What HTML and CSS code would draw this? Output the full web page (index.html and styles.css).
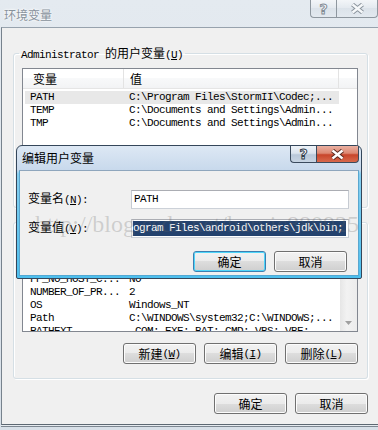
FILE: index.html
```html
<!DOCTYPE html>
<html>
<head>
<meta charset="utf-8">
<link rel="stylesheet" href="styles.css">
</head>
<body>
<div class="window">
  <div class="titlebar">
    <span class="wtitle">环境变量</span>
    <div class="wcaption">
      <span class="wbtn whelp">?</span>
      <span class="wbtn wclose">
        <svg width="15" height="11" viewBox="0 0 15 11"><path d="M2.5 1.5 L12.5 9.5 M12.5 1.5 L2.5 9.5" stroke="#8a939c" stroke-width="4.4" fill="none"/><path d="M2.5 1.5 L12.5 9.5 M12.5 1.5 L2.5 9.5" stroke="#f6f8fa" stroke-width="2.4" fill="none"/></svg>
      </span>
    </div>
  </div>
  <div class="client">
    <fieldset class="group g1">
      <legend><span class="m">Administrator </span>的用户变量<span class="m">(<u>U</u>)</span></legend>
      <div class="list l1">
        <div class="lmain">
          <div class="lhead"><span class="hc c1">变量</span><span class="hc c2">值</span><span class="hc c3"></span></div>
          <div class="rows m">
            <div class="row sel"><span class="c1">PATH</span><span class="c2">C:\Program Files\StormII\Codec;...</span></div>
            <div class="row"><span class="c1">TEMP</span><span class="c2">C:\Documents and Settings\Admin...</span></div>
            <div class="row"><span class="c1">TMP</span><span class="c2">C:\Documents and Settings\Admin...</span></div>
          </div>
        </div>
      </div>
    </fieldset>
    <fieldset class="group g2">
      <legend>系统变量<span class="m">(<u>S</u>)</span></legend>
      <div class="list l2">
        <div class="lmain">
          <div class="lhead"><span class="hc c1">变量</span><span class="hc c2">值</span></div>
          <div class="rows m">
            <div class="row"><span class="c1">ComSpec</span><span class="c2">C:\WINDOWS\system32\cmd.exe</span></div>
            <div class="row"><span class="c1">FP_NO_HOST_C...</span><span class="c2">NO</span></div>
            <div class="row"><span class="c1">NUMBER_OF_PR...</span><span class="c2">2</span></div>
            <div class="row"><span class="c1">OS</span><span class="c2">Windows_NT</span></div>
            <div class="row"><span class="c1">Path</span><span class="c2">C:\WINDOWS\system32;C:\WINDOWS;...</span></div>
            <div class="row"><span class="c1">PATHEXT</span><span class="c2">.COM;.EXE;.BAT;.CMD;.VBS;.VBE;...</span></div>
          </div>
        </div>
        <div class="vscroll">
          <div class="sarrow"><svg width="7" height="4" viewBox="0 0 7 4"><path d="M0 0 H7 L3.5 4 Z" fill="#a0a0a0"/></svg></div>
        </div>
      </div>
      <div class="btnrow">
        <span class="btn">新建<span class="m">(<u>W</u>)</span></span>
        <span class="btn">编辑<span class="m">(<u>I</u>)</span></span>
        <span class="btn">删除<span class="m">(<u>L</u>)</span></span>
      </div>
    </fieldset>
    <div class="btnrow bottom">
      <span class="btn">确定</span>
      <span class="btn">取消</span>
    </div>
  </div>
</div>

<div class="dialog">
  <div class="dtitle">
    <span class="dt">编辑用户变量</span>
    <div class="dcap">
      <span class="dcb dhelp">?</span>
      <span class="dcb dclose">
        <svg width="15" height="11" viewBox="0 0 15 11"><path d="M2.5 1.5 L12.5 9.5 M12.5 1.5 L2.5 9.5" stroke="#5a2a20" stroke-width="4.4" fill="none"/><path d="M2.5 1.5 L12.5 9.5 M12.5 1.5 L2.5 9.5" stroke="#ffffff" stroke-width="2.4" fill="none"/></svg>
      </span>
    </div>
  </div>
  <div class="dclient">
    <div class="form">
      <span class="lbl">变量名<span class="m">(<u>N</u>):</span></span>
      <div class="inp m">PATH</div>
      <span class="lbl">变量值<span class="m">(<u>V</u>):</span></span>
      <div class="inp inp2 m"><span class="seltext">ogram Files\android\others\jdk\bin;</span></div>
    </div>
    <div class="btnrow dbtns">
      <span class="btn def">确定</span>
      <span class="btn">取消</span>
    </div>
  </div>
</div>

<div class="wm">http://blog.csdn.net/harvic880925</div>
</body>
</html>
```
FILE: styles.css
```css
* { box-sizing: border-box; }
html, body { margin: 0; padding: 0; }
body {
  width: 378px;
  height: 430px;
  overflow: hidden;
  position: relative;
  font-family: "Noto Sans CJK SC", sans-serif;
  font-size: 12px;
  color: #000;
  background: #d9e1e9;
}
.m {
  font-family: "Liberation Mono", "Noto Sans CJK SC", monospace;
  font-size: 11px;
  letter-spacing: -0.6px;
}
u { text-decoration-thickness: 1px; text-underline-offset: 1px; }

/* outer window */
.window {
  width: 378px;
  height: 430px;
  background: linear-gradient(#e4eaf0, #d8e0e8);
  display: flex;
  flex-direction: column;
}
.titlebar {
  height: 27px;
  flex: none;
  display: flex;
  justify-content: space-between;
  align-items: flex-start;
  padding-left: 4px;
}
.wtitle {
  margin-top: 8px;
  line-height: 14px;
  color: #87919b;
  text-shadow: 0 0 3px #fff, 0 0 2px #fff;
}
.wcaption { display: flex; }
.wbtn {
  height: 18px;
  border: 1px solid #8e979f;
  border-top: none;
  display: flex;
  align-items: center;
  justify-content: center;
  background: linear-gradient(rgba(255,255,255,.55), rgba(226,232,238,.6) 50%, rgba(214,222,230,.6) 50%, rgba(226,232,238,.6));
}
.whelp {
  width: 26px;
  border-right: none;
  border-radius: 0 0 0 4px;
  font-family: "DejaVu Sans", sans-serif;
  font-weight: bold;
  font-size: 14px;
  line-height: 16px;
  color: #f6f8fa;
  -webkit-text-stroke: 1px #838c95;
}
.wclose {
  width: 42px;
  border-radius: 0 0 4px 0;
}

.client {
  margin-left: 1px;
  width: 377px;
  height: 398px;
  flex: none;
  border-top: 1px solid #97a2ad;
  border-left: 1px solid #77828d;
  border-bottom: 1px solid #5d6872;
  background: #f0f0f0;
  padding: 18px 10px 0 11px;
  box-shadow: 0 1px 0 #e6ebf0, 0 2px 0 #7d8791;
}

/* group boxes */
.group {
  margin: 0;
  min-width: 0;
  border: 1px solid #d5dfe5;
  border-radius: 3px;
  padding: 8px 9px 6px 8px;
  box-shadow: inset 1px 1px 0 #fff, 1px 1px 0 #fff;
}
.group legend {
  padding: 0 2px;
  margin-left: -3px;
  line-height: 14px;
  height: 14px;
}
.g2 { margin-top: 7px; padding-bottom: 14px; }

/* list views */
.list {
  border: 1px solid #828790;
  background: #fff;
  display: flex;
  overflow: hidden;
}
.l1 { height: 133px; }
.l2 { height: 95px; }
.lmain { flex: 1; min-width: 0; overflow: hidden; }
.lhead {
  display: flex;
  height: 20px;
  background: linear-gradient(#ffffff 0, #ffffff 50%, #f8f9fa 50%, #f2f3f5 100%);
  border-bottom: 1px solid #e5e5e5;
}
.hc {
  line-height: 19px;
  border-right: 1px solid #e3e3e3;
  white-space: nowrap;
}
.hc.c1 { width: 101px; padding-left: 10px; flex: none; }
.hc.c2 { width: 215px; padding-left: 6px; flex: none; }
.hc.c3 { flex: 1; border-right: none; }
.rows { padding-top: 2px; }
.row {
  display: flex;
  width: 314px;
  margin-left: 2px;
  height: 13px;
  line-height: 13px;
  white-space: nowrap;
}
.row.sel { background: #e8e8e8; }
.row .c1 { width: 99px; padding-left: 5px; flex: none; overflow: hidden; }
.row .c2 { padding-left: 5px; }
.vscroll {
  width: 17px;
  flex: none;
  background: linear-gradient(90deg, #e6e6e6, #f2f2f2 40%, #ececec);
  display: flex;
  flex-direction: column;
  justify-content: flex-end;
}
.sarrow {
  height: 17px;
  display: flex;
  align-items: center;
  justify-content: center;
}

/* buttons */
.btnrow {
  display: flex;
  justify-content: flex-end;
  gap: 8px;
  margin-top: 11px;
}
.btnrow.bottom { margin-top: 14px; }
.btn {
  width: 73px;
  height: 21px;
  border: 1px solid #707070;
  border-radius: 3px;
  background: linear-gradient(#f2f2f2 0, #ebebeb 50%, #dddddd 50%, #cfcfcf 100%);
  box-shadow: inset 0 0 0 1px #fcfcfc;
  display: flex;
  align-items: center;
  justify-content: center;
  line-height: 14px;
  white-space: nowrap;
}
.btn.def {
  border-color: #3c7fb1;
  box-shadow: inset 0 0 0 1px #4fd6fa;
}

/* edit dialog */
.dialog {
  position: absolute;
  left: 16px;
  top: 145px;
  width: 346px;
  height: 134px;
  z-index: 2;
  border: 1px solid #34465a;
  border-radius: 6px 6px 2px 2px;
  padding: 0 2px 2px;
  background: linear-gradient(#dde8f4, #c8d9ec 24px, #86cff0 28px, #4dbfee);
  display: flex;
  flex-direction: column;
}
.dtitle {
  height: 24px;
  flex: none;
  display: flex;
  justify-content: space-between;
  align-items: flex-start;
  padding-left: 3px;
}
.dt { margin-top: 4px; line-height: 15px; }
.dcap { display: flex; }
.dcb {
  height: 17px;
  border: 1px solid #3b4b5d;
  border-top: none;
  display: flex;
  align-items: center;
  justify-content: center;
}
.dhelp {
  width: 26px;
  border-right: none;
  border-radius: 0 0 0 4px;
  background: linear-gradient(#eef3f8, #dbe4ee 45%, #b9c8d9 55%, #c8d5e3);
  font-family: "DejaVu Sans", sans-serif;
  font-weight: bold;
  font-size: 14px;
  line-height: 16px;
  color: #fff;
  -webkit-text-stroke: 1px #34404c;
}
.dclose {
  width: 43px;
  border-radius: 0 0 4px 0;
  background: linear-gradient(#eab0a2, #dd8872 45%, #c8452b 55%, #d8694c);
}
.dclient {
  height: 106px;
  flex: none;
  border: 1px solid;
  border-color: #8fa6bd #5aa7cf #52a8d3 #5aa7cf;
  background: #f0f0f0;
  padding: 17px 9px 0 8px;
}
.form {
  display: grid;
  grid-template-columns: 103px 218px;
  row-gap: 7px;
  align-items: center;
}
.lbl { line-height: 19px; white-space: nowrap; }
.inp {
  height: 19px;
  border: 1px solid #abadb3;
  border-color: #abadb3 #c6cbd2 #ccd1d8 #c6cbd2;
  background: #fff;
  padding-left: 2px;
  line-height: 17px;
  overflow: hidden;
  white-space: nowrap;
}
.inp2 { padding-left: 1px; padding-top: 1px; line-height: 15px; }
.seltext {
  display: inline-block;
  background: #23426e;
  color: #fff;
  padding-right: 3px;
  line-height: 15px;
}
.dbtns { margin-top: 12px; padding-right: 2px; }

/* watermark */
.wm {
  position: absolute;
  left: 35px;
  top: 210px;
  z-index: 3;
  font-family: "Liberation Serif", serif;
  font-size: 24px;
  line-height: 28px;
  color: rgba(100, 100, 100, 0.25);
  white-space: nowrap;
  pointer-events: none;
}
```
